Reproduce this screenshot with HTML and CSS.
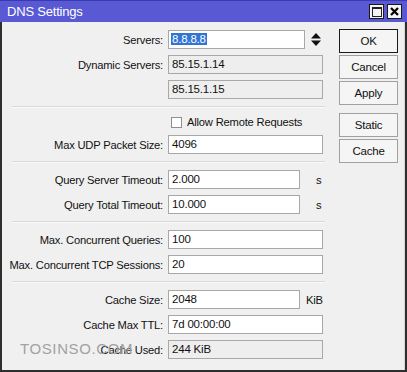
FILE: index.html
```html
<!DOCTYPE html>
<html>
<head>
<meta charset="utf-8">
<link rel="stylesheet" href="styles.css">
</head>
<body>
<div class="window">
  <div class="titlebar">
    <span class="title">DNS Settings</span>
    <div class="tb-btns">
      <span class="tb-btn"><span class="max-icon"></span></span>
      <span class="tb-btn">
        <svg width="9" height="9" viewBox="0 0 9 9"><path d="M1 1 L8 8 M8 1 L1 8" stroke="#000" stroke-width="2.2"/></svg>
      </span>
    </div>
  </div>
  <div class="content">
    <div class="form">
      <div class="row">
        <span class="label">Servers:</span>
        <span class="field servers"><span class="sel">8.8.8.8</span></span>
        <svg class="spin" width="10" height="13" viewBox="0 0 10 13"><path d="M5 0 L10 5.5 L0 5.5 Z M5 13 L10 7.5 L0 7.5 Z" fill="#111"/></svg>
      </div>
      <div class="row">
        <span class="label">Dynamic Servers:</span>
        <span class="field ro">85.15.1.14</span>
      </div>
      <div class="row">
        <span class="label"></span>
        <span class="field ro">85.15.1.15</span>
      </div>
      <div class="sep"></div>
      <div class="row short">
        <span class="label"></span>
        <span class="check"></span><span class="check-text">Allow Remote Requests</span>
      </div>
      <div class="row">
        <span class="label">Max UDP Packet Size:</span>
        <span class="field">4096</span>
      </div>
      <div class="sep"></div>
      <div class="row">
        <span class="label">Query Server Timeout:</span>
        <span class="field narrow">2.000</span><span class="unit s">s</span>
      </div>
      <div class="row">
        <span class="label">Query Total Timeout:</span>
        <span class="field narrow">10.000</span><span class="unit s">s</span>
      </div>
      <div class="sep"></div>
      <div class="row">
        <span class="label">Max. Concurrent Queries:</span>
        <span class="field">100</span>
      </div>
      <div class="row">
        <span class="label">Max. Concurrent TCP Sessions:</span>
        <span class="field">20</span>
      </div>
      <div class="sep"></div>
      <div class="row">
        <span class="label">Cache Size:</span>
        <span class="field narrow">2048</span><span class="unit">KiB</span>
      </div>
      <div class="row">
        <span class="label">Cache Max TTL:</span>
        <span class="field">7d 00:00:00</span>
      </div>
      <div class="row">
        <span class="label">Cache Used:</span>
        <span class="field ro">244 KiB</span>
      </div>
    </div>
    <div class="buttons">
      <span class="btn default">OK</span>
      <span class="btn">Cancel</span>
      <span class="btn">Apply</span>
      <span class="btn gap">Static</span>
      <span class="btn">Cache</span>
    </div>
  </div>
  <div class="watermark">TOSINSO.COM</div>
</div>
</body>
</html>
```

FILE: styles.css
```css
html, body {
  margin: 0;
  padding: 0;
  background: #f0f0f0;
}

.window {
  position: relative;
  width: 407px;
  height: 372px;
  box-sizing: border-box;
  background: #f0f0f0;
  font-family: "Liberation Sans", Arial, sans-serif;
  font-size: 11.2px;
  letter-spacing: -0.2px;
  color: #111;
  border-left: 2px solid #2e2e2e;
  border-right: 2px solid #2e2e2e;
  border-bottom: 2px solid #2e2e2e;
  display: flex;
  flex-direction: column;
}

.titlebar {
  height: 22px;
  margin: 0 -2px;
  background: #5959d4;
  border-top: 1px solid #3a3ab0;
  box-sizing: border-box;
  display: flex;
  align-items: center;
  justify-content: space-between;
  padding: 0 5px 0 7px;
}

.title {
  color: #fff;
  font-size: 13px;
  letter-spacing: -0.2px;
}

.tb-btns {
  display: flex;
  gap: 3px;
}

.tb-btn {
  width: 15px;
  height: 15px;
  box-sizing: border-box;
  background: #f4f4f4;
  border: 1px solid #1a1a1a;
  display: flex;
  align-items: center;
  justify-content: center;
}

.max-icon {
  width: 10px;
  height: 10px;
  box-sizing: border-box;
  border: 1px solid #222;
  border-top-width: 2px;
}

.content {
  flex: 1;
  display: flex;
  padding: 5px 0 0 0;
  border-right: 1px solid #d6d6d6;
}

.form {
  width: 330px;
  display: flex;
  flex-direction: column;
}

.row {
  height: 25px;
  display: flex;
  align-items: center;
}

.row.short {
  height: 20px;
}

.label {
  width: 161px;
  text-align: right;
  margin-right: 5px;
  white-space: nowrap;
}

.field {
  width: 155px;
  height: 19px;
  box-sizing: border-box;
  border: 1px solid #a8a8a8;
  background: #fff;
  padding: 0 3px;
  line-height: 17px;
  white-space: nowrap;
  font-size: 11.5px;
}

.field.ro {
  background: #eeeeee;
}

.field.narrow {
  width: 132px;
}

.field.servers {
  width: 137px;
  padding-left: 2px;
}

.sel {
  background: #3174d4;
  color: #fff;
  padding: 0 1px;
}

.spin {
  margin-left: 6px;
}

.unit {
  margin-left: 6px;
}

.unit.s {
  margin-left: 16px;
}

.sep {
  height: 10px;
  margin: 0 7px 0 10px;
  position: relative;
}

.sep::after {
  content: "";
  display: block;
  margin-top: 4px;
  height: 1px;
  background: #d9d9d9;
  border-bottom: 1px solid #fafafa;
}

.check {
  width: 11px;
  height: 11px;
  box-sizing: border-box;
  border: 1px solid #8e8e8e;
  background: #fff;
  margin-left: 3px;
  margin-right: 5px;
}

.buttons {
  margin-left: 7px;
  display: flex;
  flex-direction: column;
  width: 59px;
  padding-top: 2px;
}

.btn {
  height: 24px;
  box-sizing: border-box;
  border: 1px solid #a0a0a0;
  background: #f5f5f5;
  display: flex;
  align-items: center;
  justify-content: center;
  margin-bottom: 2px;
  font-size: 11.5px;
}

.btn.default {
  border-color: #1a1a1a;
}

.btn.gap {
  margin-top: 6px;
}

.watermark {
  position: absolute;
  left: 18px;
  top: 340px;
  font-size: 15px;
  color: #a2a2a2;
  letter-spacing: 0.6px;
}
```
